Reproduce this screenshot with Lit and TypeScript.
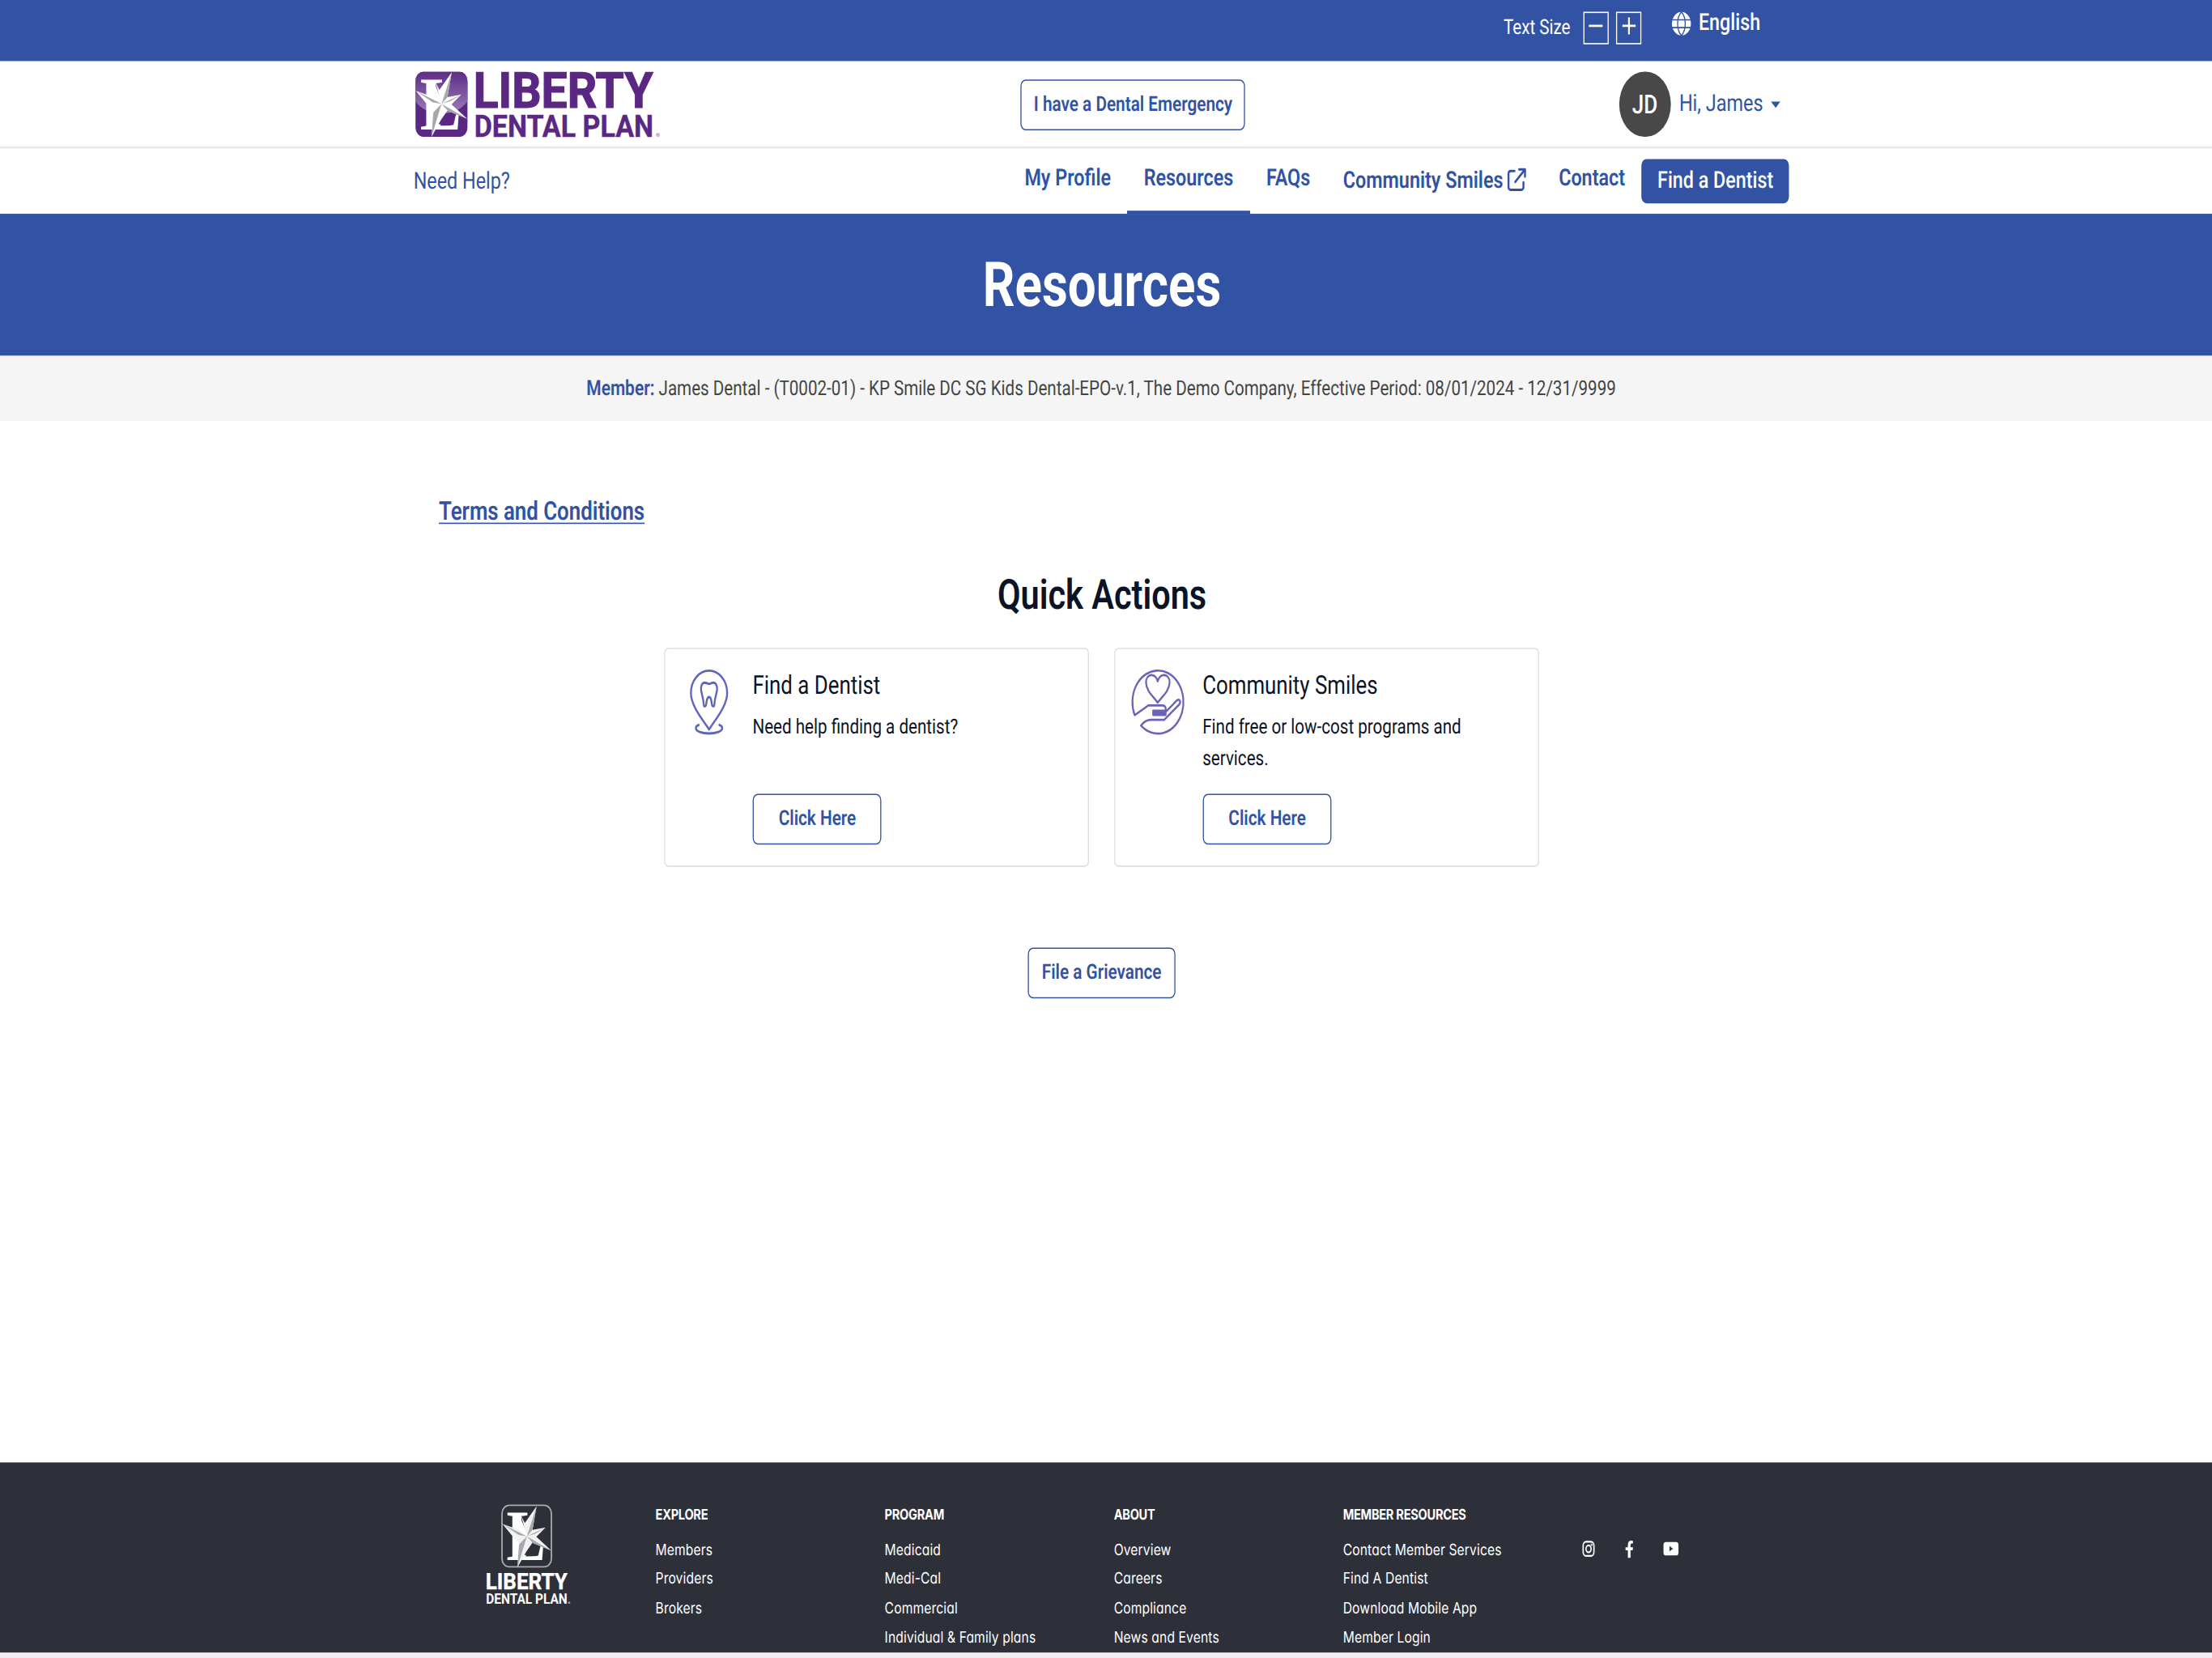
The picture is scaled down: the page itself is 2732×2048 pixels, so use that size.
import { LitElement, html, css, svg } from "lit";
import { customElement } from "lit/decorators.js";

interface QuickAction {
  title: string;
  text: string;
  icon: unknown;
}

const pinIcon = html`<svg class="icon" viewBox="-.6 .5 50 50" fill="none" stroke="#5f66ba" stroke-width="1.8" stroke-linejoin="round" stroke-linecap="round">
  <path d="M25 46.2C20 39.5 7.8 28.5 7.8 18.2a17.2 17.2 0 0 1 34.4 0C42.2 28.5 30 39.5 25 46.2z" />
  <path d="M15.2 42.7c-1.8.5-2.7 1.4-2.7 2.5 0 2.3 5.6 4 12.5 4s12.5-1.7 12.5-4c0-1.1-.9-2-2.7-2.5" />
  <path d="M21 10.3c-3 0-4 3-3.5 6 .5 3 2 5 2.5 11 .2 1.5 1.8 1.5 2.2 0 .5-3 1-6 2.8-6s2.3 3 2.8 6c.4 1.5 2 1.5 2.2 0 .5-6 2-8 2.5-11 .5-3-.5-6-3.5-6-2 0-2.5.9-4 .9s-2-.9-4-.9z" />
</svg>`;

const handIcon = html`<svg class="icon" viewBox=".7 .5 50 50" fill="none" stroke="#6a64b6" stroke-width="1.7" stroke-linejoin="round" stroke-linecap="round">
  <path d="M16 27.7h13.5c3.3 0 4 3.7 1.5 5.2M16 27.7L3.1 35.2A24.2 24.2 0 1 1 9 43.2c2.5-3 5-4.3 9-4.5h13.2l14-11.6c2.2-2.2.4-4.8-2.2-3.2l-9.8 8.3" />
  <path d="M20.6 31.8h11.8v3.3H20.6z" fill="#6a64b6" />
  <path d="M24.9 25.6C21 21 13.8 16.5 13.8 10c0-6.5 8.8-8 11.1-.8 2.3-7.2 11.3-5.7 11.3.8 0 6.5-7.3 11-11.3 15.6z" />
</svg>`;

const star = (light: string, dark: string) => svg`
  <polygon points="33.7,41.3 26,14 31,24 46.3,2.3 41,33 58,29.7 46,42 65.3,59.7 41,49.5 33,61 21.3,82 24,52 2,25.3 24,33" fill=${light} />
  <polygon points="33.7,41.3 46.3,2.3 41,33" fill=${dark} />
  <polygon points="33.7,41.3 58,29.7 44.5,38" fill=${dark} />
  <polygon points="33.7,41.3 65.3,59.7 42,50.5" fill=${dark} />
  <polygon points="33.7,41.3 21.3,82 23.5,52" fill=${dark} />
  <polygon points="33.7,41.3 2,25.3 23,39.5" fill=${dark} />`;

const headerLogo = html`<svg class="logo" viewBox="0 0 303 84" preserveAspectRatio="none" role="img">
  <defs>
    <linearGradient id="gloss" x1="0" y1="0" x2="0" y2="1">
      <stop offset="0" stop-color="#5c2a85" />
      <stop offset="1" stop-color="#9a7cb8" />
    </linearGradient>
    <clipPath id="tile"><rect x="1.5" y="1.7" width="64.2" height="80.3" rx="9.5" ry="11.5" /></clipPath>
  </defs>
  <g clip-path="url(#tile)">
    <rect width="67" height="84" fill="#5a2783" />
    <path d="M0 0h67v36c-8 13-20 17-33 17S8 49 0 36z" fill="url(#gloss)" />
    <text class="emblem" x="7" y="73.5" textLength="51" lengthAdjust="spacingAndGlyphs">L</text>
    <path d="M24 14l10 24 8-4-8 16-2 22H20V50z" fill="#fff" />
    <polygon points="35,54 28,66.5 44,66.5" fill="#5a2783" />
    ${star("#ffffff", "#a6a8ab")}
  </g>
  <text class="brand"><tspan x="73" y="46.5" font-size="61.5" textLength="222" lengthAdjust="spacingAndGlyphs" stroke-width="1.2">LIBERTY</tspan><tspan x="74" y="81.7" font-size="38" textLength="221.5" lengthAdjust="spacingAndGlyphs" stroke-width=".4">DENTAL PLAN</tspan><tspan class="reg" x="298" y="82" font-size="7">®</tspan></text>
</svg>`;

const footerLogo = html`<svg class="foot-logo" viewBox="0 0 104 124" preserveAspectRatio="none" role="img">
  <rect x="19.8" y="1.5" width="61" height="76" rx="9" ry="10" fill="none" stroke="#a9abad" stroke-width="1.8" />
  <g transform="translate(18.5 0.5) scale(0.95)">
    <text class="emblem" x="7" y="72" textLength="51" lengthAdjust="spacingAndGlyphs">L</text>
    <path d="M24 14l10 24 8-4-8 16-2 21H20V50z" fill="#fff" />
    <polygon points="35,54 28,65.5 44,65.5" fill="#2d2f39" />
    ${star("#f2f2f2", "#a6a8ab")}
  </g>
  <text class="brand white"><tspan x="-.5" y="105" font-size="28" textLength="101" lengthAdjust="spacingAndGlyphs" stroke-width=".4">LIBERTY</tspan><tspan x="0" y="123" font-size="18" textLength="100.5" lengthAdjust="spacingAndGlyphs" stroke-width="0">DENTAL PLAN</tspan><tspan class="reg white" x="101.3" y="123" font-size="3.5">®</tspan></text>
</svg>`;

const globe = html`<svg class="globe" viewBox="0 0 18 18"><circle cx="9" cy="9" r="9" fill="#fff" />
  <path d="M0 6h18M0 12h18M9 0C4.2 4 4.2 14 9 18M9 0c4.8 4 4.8 14 0 18" fill="none" stroke="#3252a3" stroke-width="1" /></svg>`;

const external = html`<svg class="external" viewBox="0 0 18 18" fill="none" stroke="#3252a3" stroke-width="1.9" stroke-linecap="round" stroke-linejoin="round">
  <path d="M6.8 2.2H3a2 2 0 0 0-2 2V15a2 2 0 0 0 2 2h10.5a2 2 0 0 0 2-2v-3.8M11.3 1H17v5.7M16.7 1.3L7.5 10.8" /></svg>`;

const actions: QuickAction[] = [
  { title: "Find a Dentist", text: "Need help finding a dentist?", icon: pinIcon },
  { title: "Community Smiles", text: "Find free or low-cost programs and services.", icon: handIcon },
];

const columns: { head: string; links: string[] }[] = [
  { head: "EXPLORE", links: ["Members", "Providers", "Brokers"] },
  { head: "PROGRAM", links: ["Medicaid", "Medi-Cal", "Commercial", "Individual & Family plans"] },
  { head: "ABOUT", links: ["Overview", "Careers", "Compliance", "News and Events"] },
  { head: "MEMBER RESOURCES", links: ["Contact Member Services", "Find A Dentist", "Download Mobile App", "Member Login"] },
];

@customElement("app-root")
export class AppRoot extends LitElement {
  static styles = css`
    :host {
      display: block;
      width: 2732px;
      height: 2048px;
      overflow: hidden;
      background: #fff;
    }
    * { box-sizing: border-box; }
    .page {
      width: 2099px;
      height: 1272.1px;
      transform: scale(1.302, 1.61);
      transform-origin: 0 0;
      display: flex;
      flex-direction: column;
      font: 400 16px/24px Roboto, "Liberation Sans", sans-serif;
      color: #0b1326;
      background: #fff;
      text-rendering: geometricPrecision;
      white-space: nowrap;
    }
    .page > * { flex: none; }
    svg { display: block; flex: none; overflow: visible; }

    .topbar {
      height: 46.6px;
      background: #3252a3;
      color: #fff;
      display: flex;
      align-items: flex-start;
      padding: 9px 0 0 1426.2px;
    }
    .size-label { width: 76px; font-size: 15.85px; font-weight: 450; margin-top: .4px; }
    .size-btn { width: 24.1px; height: 24.3px; margin: .3px 6.7px 0 0; border: 1px solid #fff; }
    .size-btn svg { width: 100%; height: 100%; }
    .globe { width: 18px; height: 18.4px; margin: .3px 7.4px 0 22.2px; }
    .lang { font-size: 17.9px; font-weight: 550; margin-top: -2.6px; }

    .brandbar {
      height: 67.2px;
      display: flex;
      align-items: flex-start;
      padding-left: 393.2px;
      background: linear-gradient(to bottom, #fff 94%, #fafafa 97%, #e6e6e6 98.5%, #e9e9e9 100%);
    }
    .logo { width: 232.7px; height: 52.2px; margin-top: 7.4px; }
    .emblem { font: 700 94px "Liberation Serif", serif; fill: #fff; }
    .brand { font-family: Roboto, sans-serif; font-weight: 700; fill: #5a2783; stroke: #5a2783; }
    .white { fill: #fff; stroke: #fff; }
    .reg { font-weight: 400; fill: #8d6cab; stroke: none; }
    .reg.white { fill: #fff; stroke: none; }
    .btn {
      height: 38.6px;
      border: 1px solid #3252a3;
      border-radius: 5px;
      color: #3252a3;
      background: #fff;
      font-size: 15.95px;
      font-weight: 600;
      line-height: 35.8px;
      text-align: center;
    }
    .emergency { width: 213px; margin: 14.4px 0 0 342.5px; }
    .avatar {
      width: 48.6px;
      height: 50.7px;
      margin: 8.2px 8.2px 0 354.7px;
      border-radius: 50%;
      background: #484848;
      color: #fff;
      font-size: 20px;
      font-weight: 500;
      line-height: 51.5px;
      text-align: center;
    }
    .hello { font-size: 18px; color: #3252a3; margin-top: 21px; }
    .caret { width: 8.8px; height: 4.7px; margin: 31.4px 0 0 7.4px; }

    .nav {
      height: 50.6px;
      display: flex;
      align-items: flex-start;
      padding-left: 392.2px;
      color: #3252a3;
      font-size: 18px;
    }
    .need { width: 564.1px; padding-top: 14px; font-size: 17.95px; }
    .link { height: 50.6px; padding: 11.7px 15.6px 0; font-size: 17.95px; font-weight: 600; }
    .link.active { box-shadow: inset 0 -2.3px 0 #3252a3; }
    .link.ext { display: flex; gap: 4px; padding-top: 12.9px; padding-right: 15.5px; }
    .external { width: 17.6px; height: 17.6px; margin-top: 2px; }
    .find {
      width: 139.8px;
      height: 33.5px;
      margin: 8.6px 0 0 .2px;
      border-radius: 5px;
      background: #3252a3;
      color: #fff;
      font-size: 17.9px;
      font-weight: 550;
      line-height: 34.4px;
      text-align: center;
    }

    .banner {
      height: 108.3px;
      background: #3252a3;
      color: #fff;
      font-size: 47.6px;
      font-weight: 700;
      line-height: 111px;
      padding-left: 932.3px;
      margin: 0;
    }
    .member {
      height: 50.2px;
      background: #f5f5f5;
      color: #444;
      font-size: 15.82px;
      line-height: 49.2px;
      padding-left: 556.3px;
    }
    .member b { color: #3252a3; font-size: 16.1px; font-weight: 650; }

    .terms {
      margin: 58.6px 0 0 416.3px;
      font-size: 19.84px;
      line-height: 24px;
      font-weight: 600;
      color: #3252a3;
      text-decoration: underline;
      text-decoration-thickness: 1.3px;
      text-underline-offset: 2px;
    }
    h2 { margin: 30.2px 0 0 946.2px; font-size: 31.85px; line-height: 40px; font-weight: 600; }
    .cards { display: flex; gap: 23.8px; margin: 21.4px 0 0 630px; }
    .card {
      width: 403px;
      height: 167.9px;
      border: 1px solid #dedede;
      border-radius: 4px;
      display: flex;
      padding: 15.7px 0 0 16.4px;
    }
    .icon { width: 50px; height: 50px; margin-right: 16.5px; }
    .card-body { width: 270px; }
    .card-title { font-size: 19.85px; margin-top: .7px; }
    .card-text { font-size: 15.82px; height: 48px; margin-top: 7.2px; white-space: normal; }
    .card .btn { width: 122.1px; margin: 15.8px 0 0 .4px; }
    .file { width: 140.3px; margin: 62.1px 0 0 974.9px; }

    .footer {
      height: 146px;
      margin-top: auto;
      background: #2d2f39;
      color: #fff;
      display: flex;
      align-items: flex-start;
      padding: 29.4px 0 0 460.8px;
      font: 400 12px/22.4px Inter, Lato, sans-serif;
      font-feature-settings: "cv11";
    }
    .foot-logo { width: 79.9px; height: 77px; margin: 2.8px 81.1px 0 0; }
    .col { width: 217.4px; }
    .head { font-weight: 700; font-size: 11.2px; letter-spacing: -.2px; margin-bottom: 4px; }
    .item { letter-spacing: .1px; }
    .social { display: flex; align-items: center; height: 14px; margin: 30.2px 0 0 10px; }
    .ig { width: 11.8px; height: 12.6px; margin-right: 28.4px; }
    .fb { width: 7.7px; height: 13.2px; margin-right: 29.1px; }
    .yt { width: 14.2px; height: 10.4px; }
    .edge { height: 4.1px; background: #f0eeee; }
  `;

  render() {
    return html`
      <div class="page">
        <div class="topbar">
          <span class="size-label">Text Size</span>
          <div class="size-btn"><svg viewBox="0 0 22 22" stroke="#fff" stroke-width="1.7"><path d="M4.2 9.7h13" /></svg></div>
          <div class="size-btn"><svg viewBox="0 0 22 22" stroke="#fff" stroke-width="1.7"><path d="M5 9.7h12.5M11.2 3.3v13" /></svg></div>
          ${globe}
          <span class="lang">English</span>
        </div>
        <header class="brandbar">
          ${headerLogo}
          <div class="btn emergency">I have a Dental Emergency</div>
          <div class="avatar">JD</div>
          <span class="hello">Hi, James</span>
          <svg class="caret" viewBox="0 0 10 5" preserveAspectRatio="none"><path d="M0 0h10L5 5z" fill="#3252a3" /></svg>
        </header>
        <nav class="nav">
          <span class="need">Need Help?</span>
          <span class="link">My Profile</span>
          <span class="link active">Resources</span>
          <span class="link">FAQs</span>
          <span class="link ext">Community Smiles${external}</span>
          <span class="link">Contact</span>
          <span class="find">Find a Dentist</span>
        </nav>
        <h1 class="banner">Resources</h1>
        <div class="member"><b>Member:</b> James Dental - (T0002-01) - KP Smile DC SG Kids Dental-EPO-v.1, The Demo Company, Effective Period: 08/01/2024 - 12/31/9999</div>
        <div class="terms">Terms and Conditions</div>
        <h2>Quick Actions</h2>
        <section class="cards">
          ${actions.map((a) => html`
            <div class="card">
              ${a.icon}
              <div class="card-body">
                <div class="card-title">${a.title}</div>
                <div class="card-text">${a.text}</div>
                <div class="btn">Click Here</div>
              </div>
            </div>`)}
        </section>
        <div class="btn file">File a Grievance</div>
        <footer class="footer">
          ${footerLogo}
          ${columns.map((c) => html`
            <div class="col">
              <div class="head">${c.head}</div>
              ${c.links.map((l) => html`<div class="item">${l}</div>`)}
            </div>`)}
          <div class="social">
            <svg class="ig" viewBox="0 0 12 12" preserveAspectRatio="none" fill="none" stroke="#fff" stroke-width="1.3"><rect x=".8" y=".8" width="10.4" height="10.4" rx="2.8" /><circle cx="6" cy="6" r="2.5" /><circle cx="9" cy="3" r=".3" /></svg>
            <svg class="fb" viewBox="0 0 8 13" preserveAspectRatio="none"><path d="M2.3 13V7.3H0V5h2.3V3.3C2.3 1.1 3.6 0 5.5 0c.9 0 1.8.2 1.8.2v2H6.2c-1 0-1.3.6-1.3 1.3V5h2.5L7 7.3H4.9V13z" fill="#fff" /></svg>
            <svg class="yt" viewBox="0 0 14 10" preserveAspectRatio="none"><rect width="14" height="10" rx="2.2" fill="#fff" /><path d="M5.6 3v4l3.3-2z" fill="#2d2f39" /></svg>
          </div>
        </footer>
        <div class="edge"></div>
      </div>
    `;
  }
}
